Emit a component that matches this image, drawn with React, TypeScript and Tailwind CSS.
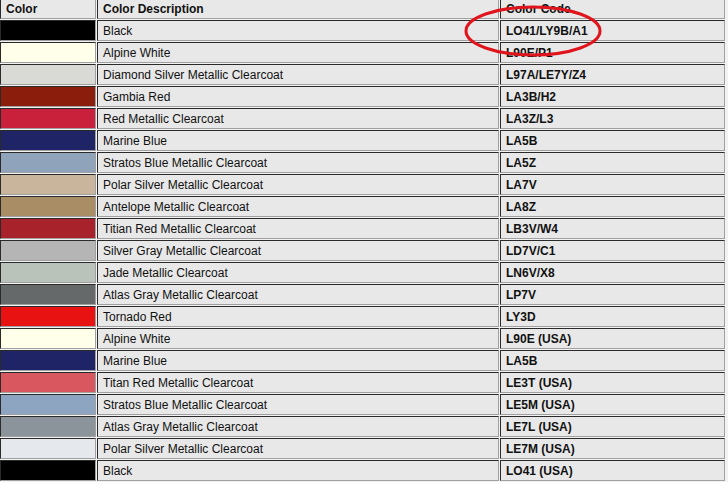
const rows: [string, string, string][] = [
  ["#000000", "Black", "LO41/LY9B/A1"],
  ["#ffffea", "Alpine White", "L90E/P1"],
  ["#d9d9d5", "Diamond Silver Metallic Clearcoat", "L97A/LE7Y/Z4"],
  ["#8a1d0c", "Gambia Red", "LA3B/H2"],
  ["#c9203c", "Red Metallic Clearcoat", "LA3Z/L3"],
  ["#1f2467", "Marine Blue", "LA5B"],
  ["#8fa3bb", "Stratos Blue Metallic Clearcoat", "LA5Z"],
  ["#c8b59c", "Polar Silver Metallic Clearcoat", "LA7V"],
  ["#a98d64", "Antelope Metallic Clearcoat", "LA8Z"],
  ["#a8222b", "Titian Red Metallic Clearcoat", "LB3V/W4"],
  ["#b5b5b5", "Silver Gray Metallic Clearcoat", "LD7V/C1"],
  ["#b9c3b9", "Jade Metallic Clearcoat", "LN6V/X8"],
  ["#65696a", "Atlas Gray Metallic Clearcoat", "LP7V"],
  ["#e81212", "Tornado Red", "LY3D"],
  ["#ffffea", "Alpine White", "L90E (USA)"],
  ["#1f2467", "Marine Blue", "LA5B"],
  ["#d9585f", "Titan Red Metallic Clearcoat", "LE3T (USA)"],
  ["#8da5c0", "Stratos Blue Metallic Clearcoat", "LE5M (USA)"],
  ["#8c949b", "Atlas Gray Metallic Clearcoat", "LE7L (USA)"],
  ["#e5e8ec", "Polar Silver Metallic Clearcoat", "LE7M (USA)"],
  ["#000000", "Black", "LO41 (USA)"],
]

const cell = "border-t border-l border-t-[#2a2a2a] border-l-[#2a2a2a] border-b border-r border-b-[#a0a0a0] border-r-[#a0a0a0] px-[5px] p-0"

export default function App() {
  return (
    <div className="relative w-[728px] h-[482px] overflow-hidden bg-[#f2f2f2]" style={{ fontFamily: '"Liberation Sans", Arial, sans-serif' }}>
      <table className="w-[727px] border-separate border-spacing-[1px] text-[12px] text-[#111] -mt-[1px] -ml-[1px]">
        <thead>
          <tr className="h-[19px] bg-[#e8e8e8] font-bold text-left">
            <th className={`${cell} w-[96px] border-t-0`}>Color</th>
            <th className={`${cell} w-[402px] border-t-0`}>Color Description</th>
            <th className={`${cell} border-t-0`}>Color Code</th>
          </tr>
        </thead>
        <tbody>
          {rows.map(([hex, desc, code], i) => (
            <tr key={i} className="h-[21px]">
              <td className={cell} style={{ backgroundColor: hex }}></td>
              <td className={`${cell} bg-[#e8e8e8]`}>{desc}</td>
              <td className={`${cell} bg-[#e8e8e8] font-bold`}>{code}</td>
            </tr>
          ))}
        </tbody>
      </table>
      <svg className="absolute left-0 top-0 pointer-events-none" width="728" height="482">
        <ellipse cx="533" cy="31" rx="67" ry="24" fill="none" stroke="#e0141c" strokeWidth="3" />
      </svg>
    </div>
  )
}
